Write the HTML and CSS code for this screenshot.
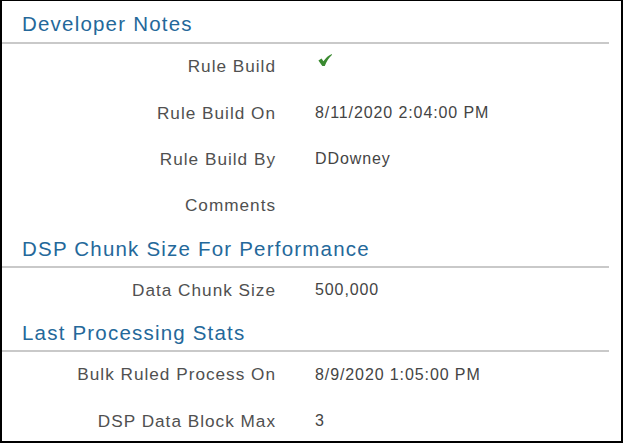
FILE: index.html
```html
<!DOCTYPE html>
<html lang="en">
<head>
  <meta charset="UTF-8">
  <meta name="viewport" content="width=device-width, initial-scale=1.0">
  <title>Developer Notes</title>
  <link rel="stylesheet" href="styles.css">
</head>
<body>
  <div class="panel">
    <h2 class="section-title first">Developer Notes</h2>
    <div class="field-row">
      <span class="field-label">Rule Build</span>
      <span class="field-value">
        <svg class="check" width="14" height="12" viewBox="0 0 14 12">
          <path d="M0.4 6.6 L3.6 4.6 L5.4 7.3 C7.8 3.9 10.6 1.3 13.9 0 L13.9 0.9 C10.9 3.6 8.5 7.1 6.8 11.9 L4.3 11.9 Z" fill="#3a8a30"/>
        </svg>
      </span>
    </div>
    <div class="field-row">
      <span class="field-label">Rule Build On</span>
      <span class="field-value">8/11/2020 2:04:00 PM</span>
    </div>
    <div class="field-row">
      <span class="field-label">Rule Build By</span>
      <span class="field-value">DDowney</span>
    </div>
    <div class="field-row">
      <span class="field-label">Comments</span>
      <span class="field-value"></span>
    </div>

    <h2 class="section-title">DSP Chunk Size For Performance</h2>
    <div class="field-row">
      <span class="field-label">Data Chunk Size</span>
      <span class="field-value">500,000</span>
    </div>

    <h2 class="section-title">Last Processing Stats</h2>
    <div class="field-row">
      <span class="field-label">Bulk Ruled Process On</span>
      <span class="field-value">8/9/2020 1:05:00 PM</span>
    </div>
    <div class="field-row">
      <span class="field-label">DSP Data Block Max</span>
      <span class="field-value">3</span>
    </div>
  </div>
</body>
</html>
```

FILE: styles.css
```css
body {
  margin: 0;
  font-family: "Liberation Sans", Arial, sans-serif;
  background: #fff;
}
.panel {
  box-sizing: border-box;
  width: 623px;
  height: 443px;
  border-style: solid;
  border-color: #000;
  border-width: 1px 2px 2px 2px;
  padding-right: 12px;
  overflow: hidden;
}
.section-title {
  margin: 0;
  height: 36px;
  line-height: 37px;
  padding-left: 20px;
  font-size: 20.5px;
  font-weight: normal;
  letter-spacing: 1.2px;
  color: #24689a;
  border-bottom: 2px solid #c9c9c9;
}
.section-title.first {
  height: 41px;
  line-height: 46px;
}
.field-row {
  display: grid;
  grid-template-columns: 273px 1fr;
  column-gap: 40px;
  align-items: center;
  box-sizing: border-box;
  height: 46.4px;
  padding-bottom: 1px;
}
.field-label {
  text-align: right;
  color: #505050;
  font-size: 17.2px;
  letter-spacing: 1px;
  margin-right: -1px;
}
.field-value {
  color: #444;
  font-size: 16px;
  letter-spacing: 0.9px;
}
.check {
  display: block;
  margin: -13px 0 0 3px;
}
```
